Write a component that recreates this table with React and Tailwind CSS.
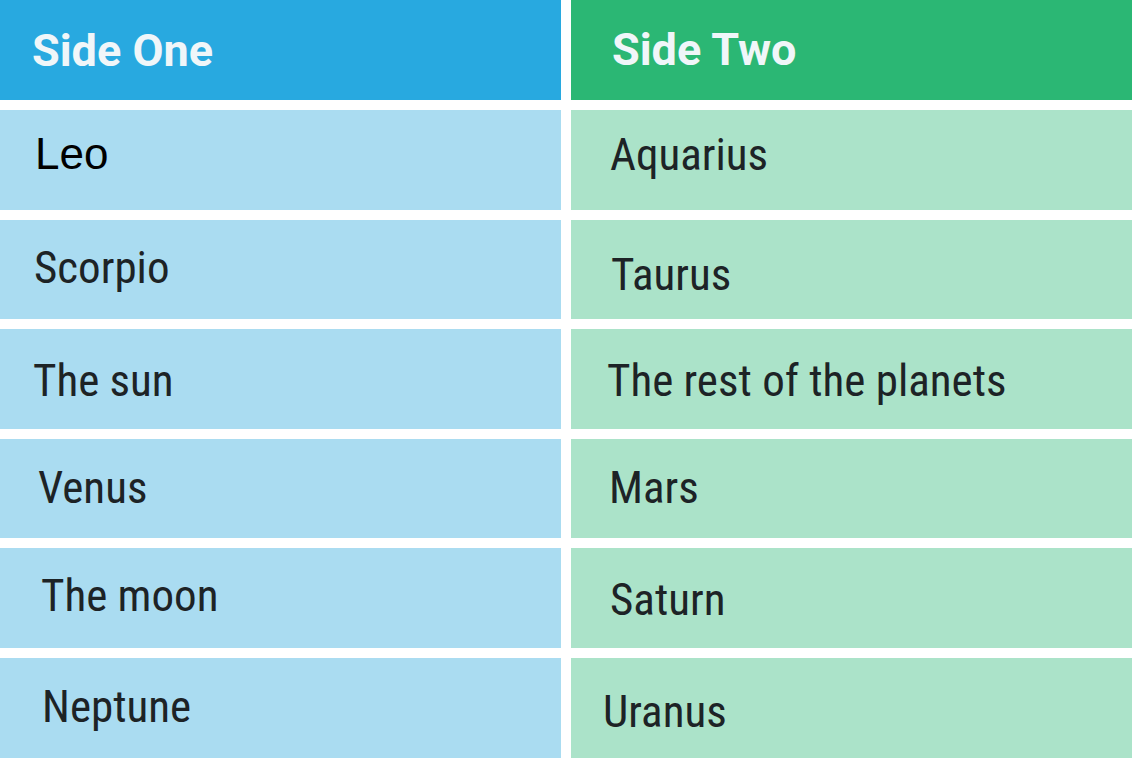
const body = '[font-family:"Roboto_Condensed",Roboto,sans-serif]';

const rows = [
  {
    left: { text: 'Leo', cls: 'pl-[35px] pt-[22px] text-[44px] text-black [font-family:"Liberation_Sans",Arial,sans-serif]' },
    right: { text: 'Aquarius', cls: 'pl-[39px] pt-[22px]' },
  },
  {
    left: { text: 'Scorpio', cls: 'pl-[34px] pt-[25px]' },
    right: { text: 'Taurus', cls: 'pl-[40px] pt-[32px]' },
  },
  {
    left: { text: 'The sun', cls: 'pl-[33px] pt-[29px]' },
    right: { text: 'The rest of the planets', cls: 'pl-[36px] pt-[29px]' },
  },
  {
    left: { text: 'Venus', cls: 'pl-[38px] pt-[26px]' },
    right: { text: 'Mars', cls: 'pl-[38px] pt-[26px]' },
  },
  {
    left: { text: 'The moon', cls: 'pl-[41px] pt-[25px]' },
    right: { text: 'Saturn', cls: 'pl-[39px] pt-[29px]' },
  },
  {
    left: { text: 'Neptune', cls: 'pl-[42px] pt-[26px]' },
    right: { text: 'Uranus', cls: 'pl-[32px] pt-[31px]' },
  },
];

function Cell({ text, cls, bg }) {
  const isLeo = text === 'Leo';
  return (
    <div className={`${bg} ${cls}`}>
      <span
        className={
          isLeo
            ? 'block leading-none whitespace-nowrap'
            : `block leading-none whitespace-nowrap text-[45px] text-[#1d2326] ${body}`
        }
      >
        {text}
      </span>
    </div>
  );
}

export default function App() {
  return (
    <div className="w-[1132px] h-[759px] overflow-hidden bg-white">
      <div className="grid grid-cols-[561px_561px] grid-rows-[100px_repeat(6,99.6px)] gap-x-[10px] gap-y-[10px]">
        {/* headers */}
        <div className="bg-[#28a9e0] pl-[32px] pt-[28px]">
          <span className='block leading-none text-[45px] font-bold text-[#f0f6f9] [font-family:Roboto,sans-serif]'>
            Side One
          </span>
        </div>
        <div className="bg-[#2bb774] pl-[41px] pt-[27px]">
          <span className='block leading-none text-[45px] font-bold text-[#f0f6f9] [font-family:Roboto,sans-serif]'>
            Side Two
          </span>
        </div>

        {rows.map((r) => (
          <>
            <Cell key={r.left.text} {...r.left} bg="bg-[#aadcf1]" />
            <Cell key={r.right.text} {...r.right} bg="bg-[#abe3c9]" />
          </>
        ))}
      </div>
    </div>
  );
}
